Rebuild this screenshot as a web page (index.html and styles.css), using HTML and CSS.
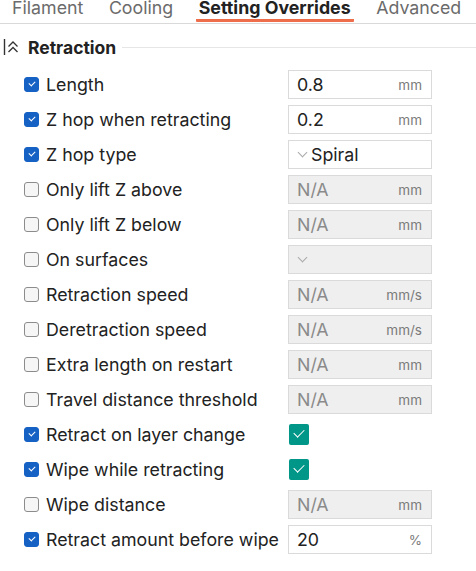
FILE: index.html
```html
<!DOCTYPE html>
<html>
<head>
<meta charset="utf-8">
<link rel="stylesheet" href="styles.css">
</head>
<body>
<div class="tabs">
  <div class="tab">Filament</div>
  <div class="tab">Cooling</div>
  <div class="tab active">Setting Overrides</div>
  <div class="tab">Advanced</div>
</div>
<div class="section">
  <svg class="sec-icon" width="17" height="18" viewBox="0 0 17 18"><path d="M1.5 1v16" stroke="#333" stroke-width="1.4" fill="none"/><path d="M5.5 8.5l4.5-4.5 4.5 4.5M5.5 14l4.5-4.5 4.5 4.5" stroke="#333" stroke-width="1.3" fill="none"/></svg>
  <span class="sec-title">Retraction</span>
  <span class="sec-line"></span>
</div>
<div class="rows">
  <div class="row"><span class="cb on"></span><span class="label">Length</span><div class="field"><span class="val">0.8</span><span class="unit">mm</span></div></div>
  <div class="row"><span class="cb on"></span><span class="label">Z hop when retracting</span><div class="field"><span class="val">0.2</span><span class="unit">mm</span></div></div>
  <div class="row"><span class="cb on"></span><span class="label">Z hop type</span><div class="field"><span class="chev"></span><span class="val">Spiral</span></div></div>
  <div class="row"><span class="cb"></span><span class="label">Only lift Z above</span><div class="field dis"><span class="val">N/A</span><span class="unit">mm</span></div></div>
  <div class="row"><span class="cb"></span><span class="label">Only lift Z below</span><div class="field dis"><span class="val">N/A</span><span class="unit">mm</span></div></div>
  <div class="row"><span class="cb"></span><span class="label">On surfaces</span><div class="field dis"><span class="chev"></span></div></div>
  <div class="row"><span class="cb"></span><span class="label">Retraction speed</span><div class="field dis"><span class="val">N/A</span><span class="unit">mm/s</span></div></div>
  <div class="row"><span class="cb"></span><span class="label">Deretraction speed</span><div class="field dis"><span class="val">N/A</span><span class="unit">mm/s</span></div></div>
  <div class="row"><span class="cb"></span><span class="label">Extra length on restart</span><div class="field dis"><span class="val">N/A</span><span class="unit">mm</span></div></div>
  <div class="row"><span class="cb"></span><span class="label">Travel distance threshold</span><div class="field dis"><span class="val">N/A</span><span class="unit">mm</span></div></div>
  <div class="row"><span class="cb on"></span><span class="label">Retract on layer change</span><span class="gcb"></span></div>
  <div class="row"><span class="cb on"></span><span class="label">Wipe while retracting</span><span class="gcb"></span></div>
  <div class="row"><span class="cb"></span><span class="label">Wipe distance</span><div class="field dis"><span class="val">N/A</span><span class="unit">mm</span></div></div>
  <div class="row"><span class="cb on"></span><span class="label">Retract amount before wipe</span><div class="field"><span class="val">20</span><span class="unit">%</span></div></div>
</div>
</body>
</html>
```

FILE: styles.css
```css
html, body { margin: 0; padding: 0; background: #fff; }
body { font-family: Inter, "Noto Sans", sans-serif; color: #222; width: 476px; height: 571px; overflow: hidden; }

.tabs { display: flex; gap: 19.5px; height: 23px; border-bottom: 1px solid #d9d9d9; overflow: hidden; padding-left: 9px; white-space: nowrap; }
.tab { font-size: 17.8px; color: #6b6b6b; padding: 0 3px; line-height: 18px; margin-top: -1px; height: 23px; box-sizing: border-box; border-bottom: 3px solid transparent; flex: none; }
.tab.active { color: #222; font-weight: 700; border-bottom-color: #ee6d4a; border-radius: 1px; }

.section { display: flex; align-items: center; height: 24px; margin-top: 11px; padding-left: 3px; }
.sec-icon { margin-right: 8px; }
.sec-title { font-weight: 700; font-size: 17.5px; color: #222; }
.sec-line { flex: 1; height: 1px; background: #e6e6e6; margin-left: 6px; }

.rows { padding-top: 8px; }
.row { display: flex; align-items: center; height: 35px; padding-left: 24px; }
.cb { width: 15px; height: 15px; box-sizing: border-box; border: 1px solid #8c8c8c; border-radius: 3px; background: #f6f6f6; margin-right: 7px; flex: none; position: relative; }
.cb.on { background: #1662c4; border-color: #1662c4; }
.cb.on::after { content: ""; position: absolute; left: 4px; top: 3px; width: 5px; height: 3px; border-left: 1.3px solid #fff; border-bottom: 1.3px solid #fff; transform: rotate(-45deg); }
.label { width: 242px; font-size: 17.8px; color: #222; white-space: nowrap; }
.field { width: 144px; height: 29px; box-sizing: border-box; border: 1px solid #dadada; background: #fff; display: flex; align-items: center; padding: 0 9px 0 8px; }
.field.dis { background: #efefef; }
.val { flex: 1; font-size: 17.8px; color: #222; }
.dis .val { color: #8a8a8a; }
.unit { font-size: 13.5px; color: #7a7a7a; }
.chev { width: 6px; height: 6px; border-right: 1px solid #aaa; border-bottom: 1px solid #aaa; transform: rotate(45deg); margin: -5px 5px 0 2px; flex: none; }
.gcb { width: 20px; height: 21px; background: #009688; border-radius: 2px; position: relative; flex: none; margin-left: 1px; }
.gcb::after { content: ""; position: absolute; left: 5px; top: 5px; width: 9px; height: 5px; border-left: 1.5px solid #fff; border-bottom: 1.5px solid #fff; transform: rotate(-45deg); }
```
